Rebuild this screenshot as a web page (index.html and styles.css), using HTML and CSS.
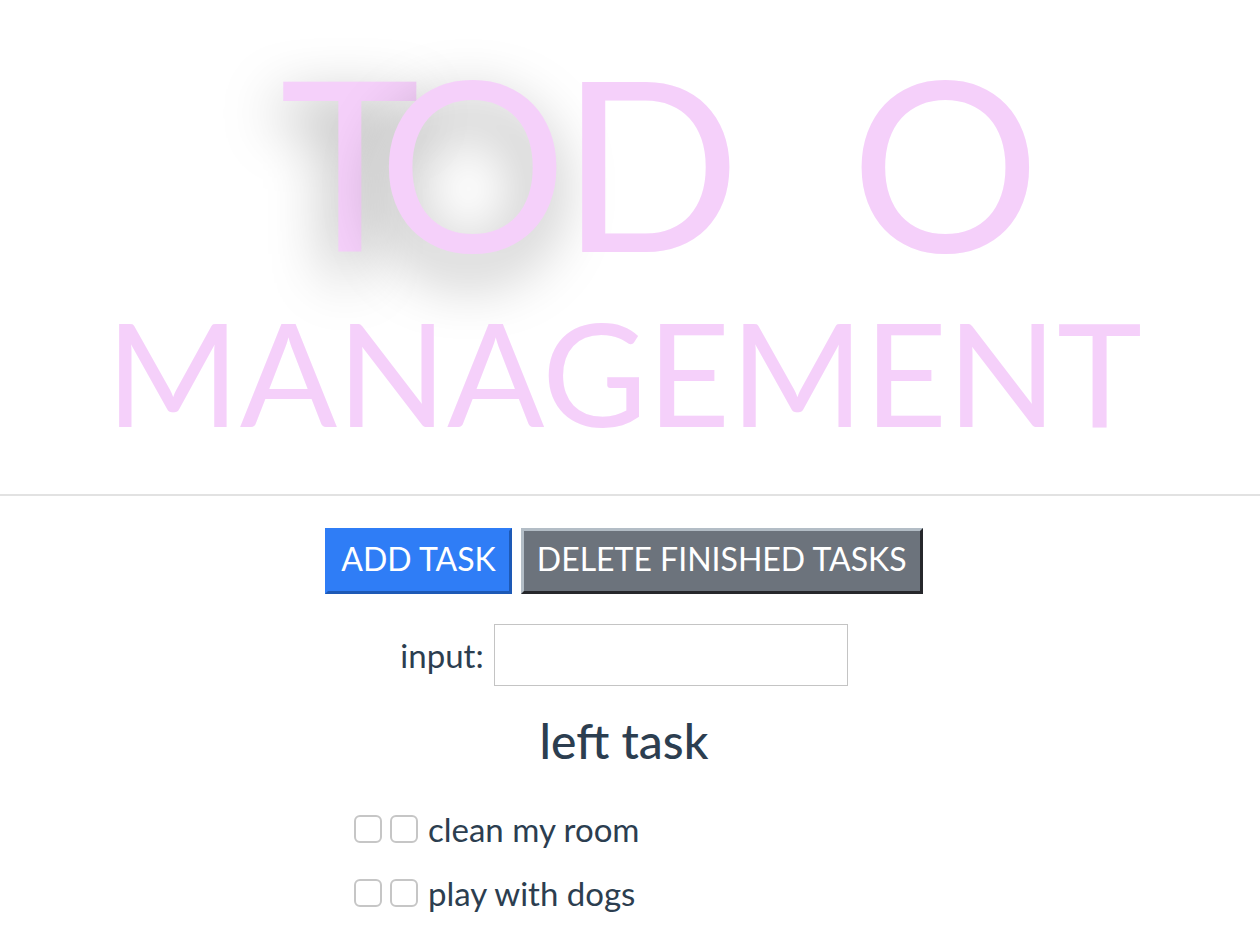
FILE: index.html
```html
<!DOCTYPE html>
<html lang="en">
<head>
<meta charset="utf-8">
<title>TODO Management</title>
<link rel="stylesheet" href="styles.css">
</head>
<body>
<div class="app">
  <header class="hero">
    <h1 class="title">
      <span class="title-top"><span class="ltr ltr-t shadowed">T</span><span class="ltr ltr-o shadowed">O</span><span class="ltr ltr-d">D</span><span class="ltr ltr-sp">&nbsp;</span><span class="ltr">O</span></span>
      <span class="title-bottom">MANAGEMENT</span>
    </h1>
  </header>
  <hr class="divider">
  <div class="actions">
    <button class="btn btn-primary">ADD TASK</button>
    <button class="btn btn-secondary">DELETE FINISHED TASKS</button>
  </div>
  <div class="input-row">
    <label class="input-label" for="task">input:</label>
    <input class="task-input" id="task" type="text">
  </div>
  <h2 class="section-title">left task</h2>
  <ul class="task-list">
    <li class="task"><input class="box" type="checkbox"><input class="box" type="checkbox"><span class="task-text">clean my room</span></li>
    <li class="task"><input class="box" type="checkbox"><input class="box" type="checkbox"><span class="task-text">play with dogs</span></li>
  </ul>
</div>
</body>
</html>
```
FILE: styles.css
```css
html, body {
  margin: 0;
  padding: 0;
  background: #ffffff;
}
.app {
  font-family: Lato, "Noto Sans", Arial, sans-serif;
  color: #2c3e50;
  text-align: center;
}
.hero {
  padding-top: 40px;
  height: 494px;
  box-sizing: border-box;
}
.title {
  margin: 0;
  font-weight: 400;
  color: #f5d0fa;
}
.title-top {
  display: block;
  font-size: 237px;
  line-height: 240px;
  white-space: nowrap;
  padding-left: 60px;
}
.ltr {
  display: inline-block;
}
.ltr-t {
  margin-right: -42px;
}
.ltr-o {
  margin-right: -7px;
}
.ltr-sp {
  margin-left: 49px;
}
.shadowed {
  text-shadow: -4px 22px 60px rgba(0, 0, 0, 0.4);
}
.title-bottom {
  display: block;
  font-size: 144px;
  line-height: 150px;
  margin-top: 17px;
  padding-right: 12px;
}
.divider {
  margin: 0;
  border: none;
  height: 2px;
  background: #e2e2e2;
}
.actions {
  display: flex;
  justify-content: center;
  gap: 9px;
  margin-top: 32px;
  padding-right: 12px;
}
.btn {
  font-family: Lato, "Noto Sans", Arial, sans-serif;
  font-size: 32px;
  color: #ffffff;
  height: 66px;
  padding: 0 13px 6px;
  border-width: 3px;
  border-style: solid;
  cursor: pointer;
}
.btn-primary {
  background: #2f7df6;
  border-color: #2f7df6 #1d59b6 #1d59b6 #2f7df6;
}
.btn-secondary {
  background: #6c737c;
  border-color: #b3bdc6 #26272b #26272b #b3bdc6;
}
.input-row {
  display: flex;
  justify-content: center;
  align-items: center;
  gap: 10px;
  margin-top: 30px;
  padding-right: 12px;
}
.input-label {
  font-size: 33px;
}
.task-input {
  width: 354px;
  height: 62px;
  box-sizing: border-box;
  border: 1px solid #c4c4c4;
  font-size: 24px;
  padding: 0 10px;
}
.section-title {
  margin: 26px 0 0;
  padding-right: 12px;
  font-size: 48px;
  line-height: 58px;
  font-weight: 500;
}
.task-list {
  list-style: none;
  margin: 27px 0 0;
  padding: 0 0 0 354px;
  text-align: left;
}
.task {
  display: flex;
  align-items: center;
  gap: 8px;
  height: 64px;
}
.box {
  appearance: none;
  -webkit-appearance: none;
  width: 28px;
  height: 28px;
  margin: 0;
  border: 2px solid #c6c6c6;
  border-radius: 6px;
  background: #fff;
  box-sizing: border-box;
}
.task-text {
  font-size: 33px;
  margin-left: 2px;
}
```
